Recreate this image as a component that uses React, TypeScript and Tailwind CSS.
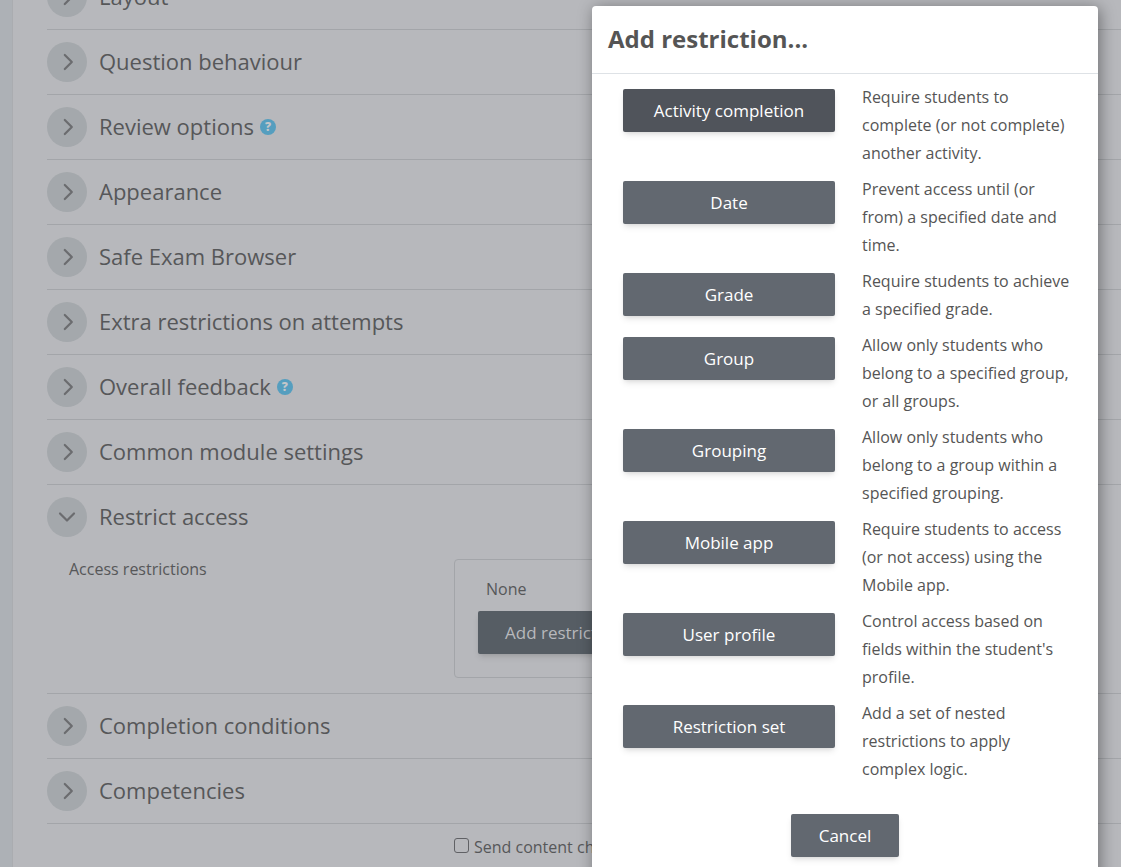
// App.tsx
// Quiz settings form with the "Add restriction..." dialog open on top.

type Section = { title: string; help?: boolean };

const SECTIONS: Section[] = [
  { title: 'Layout' },
  { title: 'Question behaviour' },
  { title: 'Review options', help: true },
  { title: 'Appearance' },
  { title: 'Safe Exam Browser' },
  { title: 'Extra restrictions on attempts' },
  { title: 'Overall feedback', help: true },
  { title: 'Common module settings' },
];

const TAIL_SECTIONS: Section[] = [{ title: 'Completion conditions' }, { title: 'Competencies' }];

const RESTRICTIONS = [
  { name: 'Activity completion', text: 'Require students to complete (or not complete) another activity.' },
  { name: 'Date', text: 'Prevent access until (or from) a specified date and time.' },
  { name: 'Grade', text: 'Require students to achieve a specified grade.' },
  { name: 'Group', text: 'Allow only students who belong to a specified group, or all groups.' },
  { name: 'Grouping', text: 'Allow only students who belong to a group within a specified grouping.' },
  { name: 'Mobile app', text: 'Require students to access (or not access) using the Mobile app.' },
  { name: 'User profile', text: "Control access based on fields within the student's profile." },
  { name: 'Restriction set', text: 'Add a set of nested restrictions to apply complex logic.' },
];

const Chevron = ({ open }: { open?: boolean }) => (
  <svg
    viewBox="0 0 20 20"
    className="size-5"
    fill="none"
    stroke="currentColor"
    strokeWidth="2.2"
    strokeLinecap="round"
    strokeLinejoin="round"
  >
    <path d={open ? 'M3 6.5l7 7 7-7' : 'M7.8 3l7 7-7 7'} />
  </svg>
);

const HelpButton = () => (
  <button
    type="button"
    aria-label="Help"
    className="ml-1.5 flex size-4 items-center justify-center rounded-full bg-[#559ebf] text-xs leading-4 font-extrabold text-[#c3c6ca]"
  >
    ?
  </button>
);

const SectionHeader = ({ title, help, open }: Section & { open?: boolean }) => (
  <div className="flex h-16 items-center">
    <button
      type="button"
      aria-label={title}
      aria-expanded={!!open}
      className="flex size-10 items-center justify-center rounded-full bg-[#a4a8ac] text-[#6b6c6f]"
    >
      <Chevron open={open} />
    </button>
    <h3 className="ml-3 pb-0.5 text-[22px] leading-8 text-[#565759]">{title}</h3>
    {help && <HelpButton />}
  </div>
);

const RestrictAccess = () => (
  <section className="border-b border-[#a3a5a9] pb-[15px]">
    <SectionHeader title="Restrict access" open />
    <div className="flex pt-[10px] pl-[22px]">
      <div className="w-[385px] shrink-0 text-base leading-5 text-[#565759]">Access restrictions</div>
      <div className="mr-6 h-[119px] flex-1 rounded border border-[#a3a5a9] px-[23px] pt-[15px]">
        <p className="pl-2 text-base leading-7 text-[#565759]">None</p>
        <button
          type="button"
          className="mt-2 h-[43px] rounded-xs bg-[#565d64] px-[27px] text-[17px] font-medium text-[#b7b8bc] shadow-md"
        >
          Add restriction...
        </button>
      </div>
    </div>
  </section>
);

const RestrictionDialog = () => (
  <div
    role="dialog"
    aria-labelledby="dialog-title"
    className="absolute top-1.5 right-[23px] w-[506px] rounded-t bg-white text-[#555555] shadow-[2px_2px_16px_rgba(0,0,0,0.4)]"
  >
    <div className="flex h-[68px] items-center border-b border-[#dee2e6] px-4 pb-0.5">
      <h2 id="dialog-title" className="text-2xl font-bold">
        Add restriction...
      </h2>
    </div>
    <ul className="flex flex-col gap-2 pt-[9px] pr-[26px] pl-[31px]">
      {RESTRICTIONS.map(({ name, text }, i) => (
        <li key={name} className="flex items-start gap-[27px]">
          <button
            type="button"
            aria-describedby={`restriction-${i}`}
            className={`mt-1.5 h-[43px] w-[212px] shrink-0 rounded-xs text-[17px] font-medium text-white shadow-md ${
              i === 0 ? 'bg-[#50545b]' : 'bg-[#626870]'
            }`}
          >
            {name}
          </button>
          <p id={`restriction-${i}`} className="text-base leading-7">
            {text}
          </p>
        </li>
      ))}
    </ul>
    <div className="flex justify-center pt-[31px] pb-8">
      <button
        type="button"
        className="h-[43px] w-[108px] rounded-xs bg-[#626870] text-[17px] font-medium text-white shadow-md"
      >
        Cancel
      </button>
    </div>
  </div>
);

export default function App() {
  return (
    <div className="relative h-screen overflow-hidden bg-[#adb1b6] pl-3 font-['Open_Sans',sans-serif]">
      <main className="flow-root min-h-full border-l border-[#aaacb0] bg-[#b7b8bc] pl-[34px]">
        {/* the form is scrolled, so the first section is cut off at the top */}
        <form className="-mt-[35px]">
          {SECTIONS.map((s) => (
            <section key={s.title} className="border-b border-[#a3a5a9]">
              <SectionHeader {...s} />
            </section>
          ))}
          <RestrictAccess />
          {TAIL_SECTIONS.map((s) => (
            <section key={s.title} className="border-b border-[#a3a5a9]">
              <SectionHeader {...s} />
            </section>
          ))}
          <label className="ml-[407px] flex items-center gap-[5px] pt-[9px] text-base leading-7 text-[#565759]">
            <input
              type="checkbox"
              className="mb-1 size-[15px] appearance-none rounded-[3px] border border-[#606165] bg-[#b7b8bc]"
            />
            Send content change notification
          </label>
        </form>
      </main>
      <RestrictionDialog />
    </div>
  );
}
